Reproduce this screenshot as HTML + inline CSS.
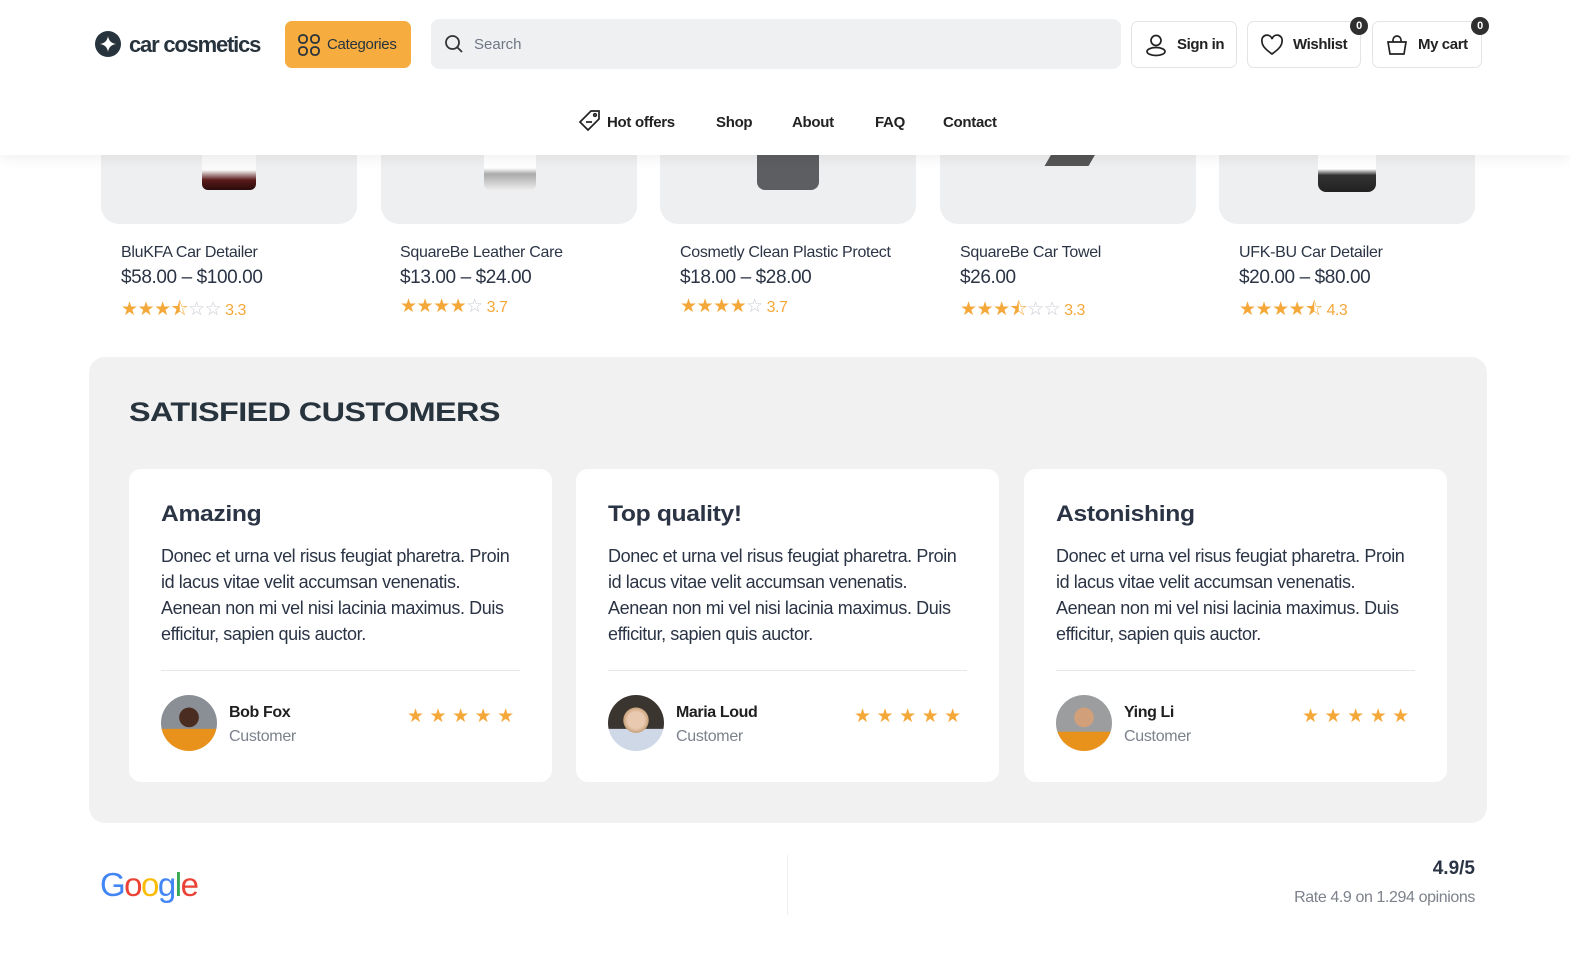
<!DOCTYPE html>
<html><head><meta charset="utf-8"><style>
*{box-sizing:border-box;margin:0;padding:0}
body{width:1570px;height:955px;overflow:hidden;background:#fff;font-family:"Liberation Sans",sans-serif;color:#2b3445;position:relative}
.abs{position:absolute}
.prod{position:absolute;top:120px;width:256px;height:104px;background:#eeeff0;border-radius:0 0 18px 18px}
.pname{position:absolute;top:244px;font-size:16px;color:#2b3445;letter-spacing:-0.3px}
.price{position:absolute;top:267px;font-size:19px;color:#2b3445;letter-spacing:-0.4px}
.rate{position:absolute;top:295px;font-size:16px;color:#f5a83a;letter-spacing:-0.5px}
.rate b{font-weight:normal;font-size:19px}
.rate i{font-style:normal;color:#c9ccd3;font-size:19px}
header{position:absolute;left:0;top:0;width:1570px;height:155px;background:#fff;box-shadow:0 4px 12px rgba(0,0,0,0.06);z-index:5}
.btn{position:absolute;top:21px;height:47px;border:1px solid #e2e4e8;border-radius:7px;background:#fff;font-weight:bold;font-size:15px;color:#222;display:flex;align-items:center;padding-left:12px;letter-spacing:-0.4px}
.btn svg{margin-right:9px}
.badge{position:absolute;top:-5px;right:-8px;width:18px;height:18px;border-radius:50%;background:#2f2f2f;color:#fff;font-size:11px;display:flex;align-items:center;justify-content:center;font-weight:bold}
nav a{position:absolute;top:114px;font-weight:bold;font-size:15px;color:#222;letter-spacing:-0.3px;text-decoration:none}
.card{position:absolute;top:469px;width:423px;height:313px;background:#fff;border-radius:12px}
.card h3{position:absolute;left:32px;top:32px;font-size:22px;font-weight:900;letter-spacing:-0.3px;color:#2b3445;transform:scaleX(1.12);transform-origin:left}
.card p{position:absolute;left:32px;top:74px;width:362px;font-size:18px;line-height:26px;color:#2b3445;letter-spacing:-0.4px}
.card hr{position:absolute;left:32px;top:201px;width:359px;border:0;border-top:1px solid #e6e7ea}
.av{position:absolute;left:32px;top:226px;width:56px;height:56px;border-radius:50%;overflow:hidden;background:#c9cdd2}
.nm{position:absolute;left:100px;top:235px;font-weight:bold;font-size:16px;color:#1f1f1f;letter-spacing:-0.4px}
.cu{position:absolute;left:100px;top:259px;font-size:16px;color:#7c818b;letter-spacing:-0.3px}
.st{position:absolute;left:278px;top:236px;font-size:19px;color:#f5a83a;letter-spacing:5.5px}
</style></head><body>

<div class="prod" style="left:101px"><div class="abs" style="left:101px;top:30px;width:54px;height:40px;background:linear-gradient(#fafafa 50%,#5a1a1a 75%,#2a0c0c);border-radius:0 0 6px 6px"></div></div>
<div class="prod" style="left:381px"><div class="abs" style="left:103px;top:30px;width:52px;height:40px;background:linear-gradient(#fff 45%,#aaa 60%,#ececec);border-radius:0 0 6px 6px"></div></div>
<div class="prod" style="left:660px"><div class="abs" style="left:97px;top:30px;width:62px;height:40px;background:#5c5e61;border-radius:0 0 8px 8px"></div></div>
<div class="prod" style="left:940px"><div class="abs" style="left:108px;top:34px;width:44px;height:12px;background:#555;transform:skewX(-30deg)"></div></div>
<div class="prod" style="left:1219px"><div class="abs" style="left:99px;top:30px;width:58px;height:42px;background:linear-gradient(#fff 45%,#333 60%,#222);border-radius:0 0 8px 8px"></div></div>

<div class="pname" style="left:121px">BluKFA Car Detailer</div><div class="price" style="left:121px">$58.00 – $100.00</div><div class="rate" style="left:121px"><b>★★★⯪</b><i>☆☆</i> 3.3</div>
<div class="pname" style="left:400px">SquareBe Leather Care</div><div class="price" style="left:400px">$13.00 – $24.00</div><div class="rate" style="left:400px"><b>★★★★</b><i>☆</i> 3.7</div>
<div class="pname" style="left:680px">Cosmetly Clean Plastic Protect</div><div class="price" style="left:680px">$18.00 – $28.00</div><div class="rate" style="left:680px"><b>★★★★</b><i>☆</i> 3.7</div>
<div class="pname" style="left:960px">SquareBe Car Towel</div><div class="price" style="left:960px">$26.00</div><div class="rate" style="left:960px"><b>★★★⯪</b><i>☆☆</i> 3.3</div>
<div class="pname" style="left:1239px">UFK-BU Car Detailer</div><div class="price" style="left:1239px">$20.00 – $80.00</div><div class="rate" style="left:1239px"><b>★★★★⯪</b> 4.3</div>

<header>
 <svg class="abs" style="left:95px;top:31px" width="26" height="26" viewBox="0 0 26 26"><circle cx="13" cy="13" r="13" fill="#27333d"/><path d="M13 5 Q14 12 21 13 Q14 14 13 21 Q12 14 5 13 Q12 12 13 5Z" fill="#fff"/></svg>
 <div class="abs" style="left:129px;top:32px;font-size:22px;font-weight:bold;color:#27333d;letter-spacing:-1.2px">car cosmetics</div>
 <div class="abs" style="left:285px;top:21px;width:126px;height:47px;background:#f7ac3f;border-radius:7px;display:flex;align-items:center;padding-left:13px;font-size:15px;color:#27333d;letter-spacing:-0.3px">
  <svg width="22" height="22" viewBox="0 0 22 22" fill="none" stroke="#27333d" stroke-width="1.8" style="margin-right:7px"><rect x="1" y="1" width="8" height="8" rx="3.5"/><rect x="13" y="1" width="8" height="8" rx="3.5"/><rect x="1" y="13" width="8" height="8" rx="3.5"/><rect x="13" y="13" width="8" height="8" rx="3.5"/></svg>Categories</div>
 <div class="abs" style="left:431px;top:19px;width:690px;height:50px;background:#eff0f2;border-radius:8px;display:flex;align-items:center;padding-left:13px;font-size:15px;color:#6f7684">
  <svg width="20" height="20" viewBox="0 0 20 20" fill="none" stroke="#333" stroke-width="1.8" style="margin-right:10px"><circle cx="8.5" cy="8.5" r="6.5"/><path d="M13.5 13.5L18 18"/></svg>Search</div>
 <div class="btn" style="left:1131px;width:106px"><svg width="24" height="24" viewBox="0 0 24 24" fill="none" stroke="#222" stroke-width="1.7"><circle cx="12" cy="7.5" r="5"/><ellipse cx="12" cy="18.5" rx="9" ry="4"/></svg>Sign in</div>
 <div class="btn" style="left:1247px;width:114px"><svg width="24" height="24" viewBox="0 0 24 24" fill="none" stroke="#222" stroke-width="1.7"><path d="M12 21C5 16 2 12.5 2 8.5A5 5 0 0 1 12 6A5 5 0 0 1 22 8.5C22 12.5 19 16 12 21Z"/></svg>Wishlist<div class="badge">0</div></div>
 <div class="btn" style="left:1372px;width:110px"><svg width="24" height="24" viewBox="0 0 24 24" fill="none" stroke="#222" stroke-width="1.7"><path d="M3 9H21L19 21H5Z"/><path d="M8 9V7A4 4 0 0 1 16 7V9"/></svg>My cart<div class="badge">0</div></div>
 <svg class="abs" style="left:578px;top:109px" width="24" height="24" viewBox="0 0 24 24" fill="none" stroke="#222" stroke-width="1.7"><path d="M13 2H21V10L10 21L2 13Z"/><circle cx="17" cy="6" r="1.3"/><path d="M8 13H14M11 10.5v0M11 15.5v0"/></svg>
 <nav><a style="left:607px">Hot offers</a><a style="left:716px">Shop</a><a style="left:792px">About</a><a style="left:875px">FAQ</a><a style="left:943px">Contact</a></nav>
</header>

<div class="abs" style="left:89px;top:357px;width:1398px;height:466px;background:#f1f1f2;border-radius:16px"></div>
<div class="abs" style="left:129px;top:397px;font-size:27px;font-weight:900;color:#27333d;letter-spacing:-0.5px;transform:scaleX(1.2);transform-origin:left">SATISFIED CUSTOMERS</div>

<div class="card" style="left:129px"><h3>Amazing</h3><p>Donec et urna vel risus feugiat pharetra. Proin id lacus vitae velit accumsan venenatis. Aenean non mi vel nisi lacinia maximus. Duis efficitur, sapien quis auctor.</p><hr><div class="av" style="background:radial-gradient(circle at 50% 40%,#4a2d20 22%,transparent 23%),linear-gradient(#8a8f96 60%,#e8921c 61%)"></div><div class="nm">Bob Fox</div><div class="cu">Customer</div><div class="st">★★★★★</div></div>
<div class="card" style="left:576px"><h3>Top quality!</h3><p>Donec et urna vel risus feugiat pharetra. Proin id lacus vitae velit accumsan venenatis. Aenean non mi vel nisi lacinia maximus. Duis efficitur, sapien quis auctor.</p><hr><div class="av" style="background:radial-gradient(circle at 50% 45%,#e9c9b0 20%,#c9a27a 30%,transparent 31%),linear-gradient(#3b3530 60%,#cfd8e6 61%)"></div><div class="nm">Maria Loud</div><div class="cu">Customer</div><div class="st">★★★★★</div></div>
<div class="card" style="left:1024px"><h3>Astonishing</h3><p>Donec et urna vel risus feugiat pharetra. Proin id lacus vitae velit accumsan venenatis. Aenean non mi vel nisi lacinia maximus. Duis efficitur, sapien quis auctor.</p><hr><div class="av" style="background:radial-gradient(circle at 50% 40%,#d1a07a 22%,transparent 23%),linear-gradient(#9b9d9f 65%,#e8921c 66%)"></div><div class="nm">Ying Li</div><div class="cu">Customer</div><div class="st">★★★★★</div></div>

<div class="abs" style="left:100px;top:866px;font-size:33px;letter-spacing:-1.5px"><span style="color:#4285f4">G</span><span style="color:#ea4335">o</span><span style="color:#fbbc05">o</span><span style="color:#4285f4">g</span><span style="color:#34a853">l</span><span style="color:#ea4335">e</span></div>
<div class="abs" style="left:787px;top:855px;width:1px;height:60px;background:#eceef0"></div>
<div class="abs" style="right:95px;top:858px;font-size:19px;font-weight:bold;color:#2b3445">4.9/5</div>
<div class="abs" style="right:95px;top:889px;font-size:16px;color:#7c818b;letter-spacing:-0.4px">Rate 4.9 on 1.294 opinions</div>
</body></html>
